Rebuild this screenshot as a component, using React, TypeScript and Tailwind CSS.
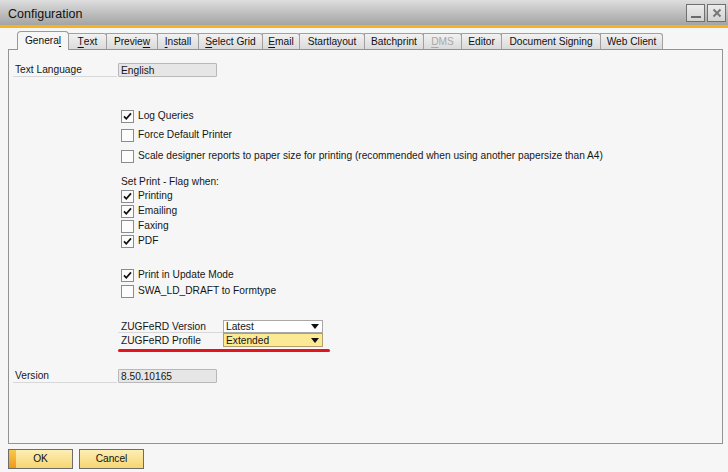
import React from "react";

const F = "font-['Liberation_Sans',Arial,sans-serif]";

function Check({ checked }: { checked?: boolean }) {
  return (
    <div className="w-[13px] h-[13px] border border-[#8c8c8c] bg-[#fcfcfc] flex items-center justify-center shrink-0">
      {checked && (
        <svg width="11" height="11" viewBox="0 0 11 11">
          <path d="M2 5.3 L4.3 7.8 L9 2.4" fill="none" stroke="#111" strokeWidth="1.7" />
        </svg>
      )}
    </div>
  );
}

function CheckRow({ label, checked, mt }: { label: string; checked?: boolean; mt: string }) {
  return (
    <div className={`flex items-center h-[14px] pl-[112px] gap-[4px] ${mt}`}>
      <Check checked={checked} />
      <span className="leading-none pt-[1px]">{label}</span>
    </div>
  );
}

type Tab = { label: React.ReactNode; w: number; active?: boolean; disabled?: boolean };

const U = ({ children }: { children: React.ReactNode }) => <span className="underline underline-offset-[2px]">{children}</span>;

const tabs: Tab[] = [
  { label: <>Genera<U>l</U></>, w: 52, active: true },
  { label: <><U>T</U>ext</>, w: 39 },
  { label: <>Previe<U>w</U></>, w: 52 },
  { label: <><U>I</U>nstall</>, w: 42 },
  { label: <><U>S</U>elect Grid</>, w: 65 },
  { label: <><U>E</U>mail</>, w: 38 },
  { label: <>Startlayout</>, w: 66 },
  { label: <>Batchprint</>, w: 60 },
  { label: <><U>D</U>MS</>, w: 39, disabled: true },
  { label: <>Editor</>, w: 41 },
  { label: <>Document Signing</>, w: 100 },
  { label: <>Web Client</>, w: 63 },
];

export default function App() {
  return (
    <div className={`w-[728px] h-[472px] bg-[#f6f6f6] flex flex-col overflow-hidden text-[10.2px] text-[#161616] ${F}`}>
      {/* title bar */}
      <div className="h-[25px] bg-gradient-to-b from-[#dedede] to-[#a4a4a4] flex items-center justify-between pl-[8px] pr-[2px]">
        <span className="text-[12.5px] text-[#111] pt-[3px]">Configuration</span>
        <div className="flex gap-[2px] items-center">
          <div className="w-[19px] h-[18px] border border-[#707070] bg-gradient-to-b from-[#ececec] to-[#d2d2d2] flex items-end justify-center pb-[3px]">
            <div className="w-[10px] h-[2px] bg-[#6a6a6a]" />
          </div>
          <div className="w-[19px] h-[18px] border border-[#707070] bg-gradient-to-b from-[#ececec] to-[#d2d2d2] flex items-center justify-center">
            <svg width="10" height="10" viewBox="0 0 10 10">
              <path d="M1.5 1.5 L8.5 8.5 M8.5 1.5 L1.5 8.5" stroke="#777" strokeWidth="2" />
            </svg>
          </div>
        </div>
      </div>
      <div className="h-[3px] bg-[#f6b21f]" />

      {/* tabs */}
      <div className="flex items-end h-[21px] pl-[17px] relative z-10">
        {tabs.map((t, i) => (
          <div
            key={i}
            style={{ width: t.w }}
            className={
              t.active
                ? "h-[19px] -mb-px bg-[#f6f6f6] border border-b-0 border-[#9a9a9a] rounded-t-[4px] flex items-center justify-center text-[#111]"
                : `h-[16px] ${i > 0 ? "-ml-px" : ""} bg-gradient-to-b from-[#f2f2f2] to-[#dadada] border border-b-0 border-[#a0a0a0] rounded-tr-[3px] flex items-center justify-center pt-[1px] ${t.disabled ? "text-[#a8a8a8]" : "text-[#111]"}`
            }
          >
            {t.label}
          </div>
        ))}
      </div>

      {/* panel */}
      <div className="ml-[8px] w-[715px] h-[395px] border border-[#939393] flex flex-col">
        <div className="flex items-center h-[14px] mt-[13px]">
          <div className="ml-[4px] w-[104px] pl-[2px] pt-[1px] h-[14px] flex items-center border-b border-[#d8d8d8]">Text Language</div>
          <div className="ml-[1px] w-[99px] h-[14px] bg-[#e6e6e6] border border-[#b8b8b8] rounded-[1px] flex items-center pl-[2px] pt-[1px]">English</div>
        </div>

        <CheckRow label="Log Queries" checked mt="mt-[32px]" />
        <CheckRow label="Force Default Printer" mt="mt-[5px]" />
        <CheckRow label="Scale designer reports to paper size for printing (recommended when using another papersize than A4)" mt="mt-[7px]" />

        <div className="h-[14px] flex items-center pl-[112px] pt-[1px] mt-[11px]">Set Print - Flag when:</div>
        <CheckRow label="Printing" checked mt="mt-[1px]" />
        <CheckRow label="Emailing" checked mt="mt-[1px]" />
        <CheckRow label="Faxing" mt="mt-[1px]" />
        <CheckRow label="PDF" checked mt="mt-[1px]" />

        <CheckRow label="Print in Update Mode" checked mt="mt-[20px]" />
        <CheckRow label="SWA_LD_DRAFT to Formtype" mt="mt-[2px]" />

        <div className="flex items-center h-[13px] mt-[22px] pl-[109px]">
          <div className="w-[105px] h-[13px] flex items-center pl-[3px] pt-[1px] border-b border-[#d8d8d8]">ZUGFeRD Version</div>
          <div className="w-[100px] h-[13px] bg-white border border-[#a8a8a8] flex items-center justify-between pl-[2px] pr-[3px]">
            <span className="pt-[1px]">Latest</span>
            <svg width="8" height="5" viewBox="0 0 8 5"><path d="M0 0 H8 L4 5 Z" fill="#111" /></svg>
          </div>
        </div>
        <div className="flex items-center h-[14px] pl-[109px]">
          <div className="w-[105px] h-[14px] flex items-center pl-[3px] pt-[1px]">ZUGFeRD Profile</div>
          <div className="w-[100px] h-[14px] bg-[#fce994] border border-[#b0a070] flex items-center justify-between pl-[2px] pr-[3px]">
            <span className="pt-[1px]">Extended</span>
            <svg width="8" height="5" viewBox="0 0 8 5"><path d="M0 0 H8 L4 5 Z" fill="#111" /></svg>
          </div>
        </div>
        <div className="ml-[109px] mt-[2px] w-[212px] h-[3px] rounded-full bg-[#e3141d]" />

        <div className="flex items-center h-[14px] mt-[17px]">
          <div className="ml-[4px] w-[104px] pl-[2px] pt-[1px] h-[14px] flex items-center border-b border-[#d8d8d8]">Version</div>
          <div className="ml-[1px] w-[99px] h-[14px] bg-[#e6e6e6] border border-[#b8b8b8] rounded-[1px] flex items-center pl-[2px] pt-[1px]">8.50.10165</div>
        </div>
      </div>

      {/* buttons */}
      <div className="flex gap-[6px] ml-[8px] mt-[5px]">
        <div className="relative w-[65px] h-[20px] border border-[#6c6c6c] bg-gradient-to-b from-[#fdeeb4] to-[#f6d670] flex items-center justify-center text-[#111]">
          <div className="absolute left-0 top-0 bottom-0 w-[7px] bg-gradient-to-b from-[#f9c84a] to-[#ee9a16]" />
          <span className="relative">OK</span>
        </div>
        <div className="w-[65px] h-[20px] border border-[#6c6c6c] bg-gradient-to-b from-[#fdeeb4] to-[#f6d670] flex items-center justify-center text-[#111]">
          Cancel
        </div>
      </div>
    </div>
  );
}
